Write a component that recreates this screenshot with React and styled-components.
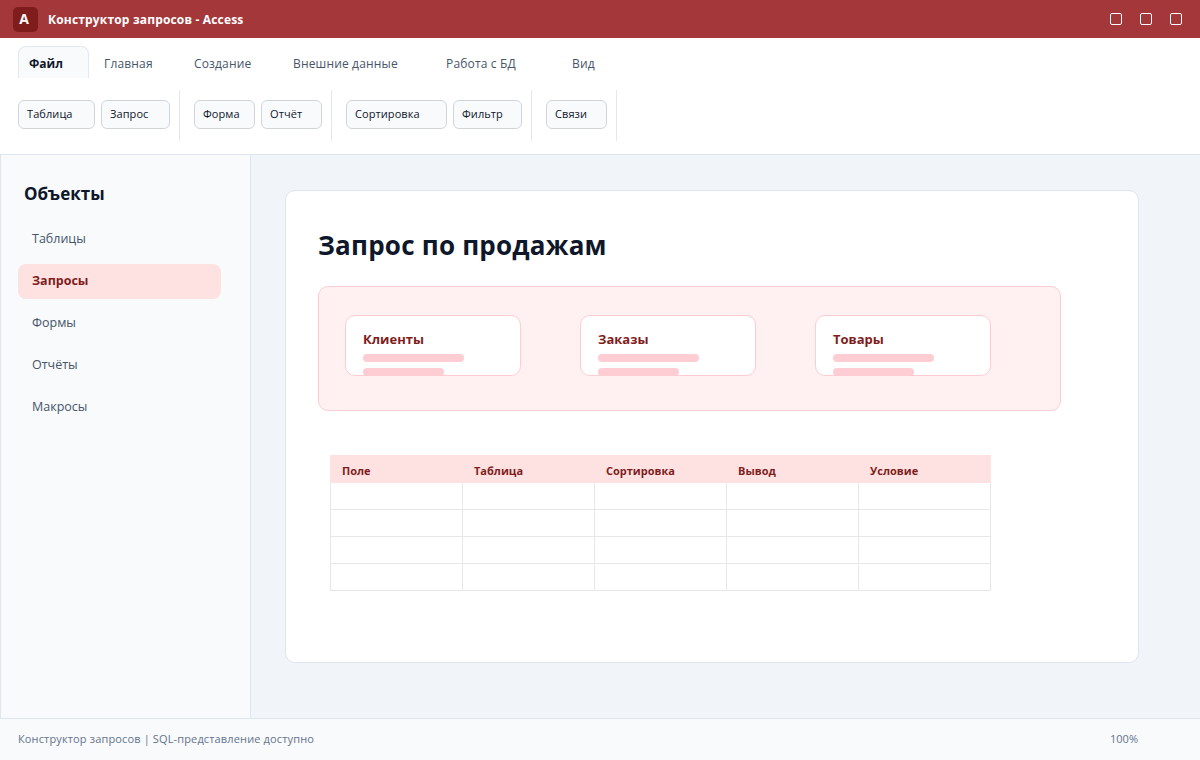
import React from 'react';
import styled, { createGlobalStyle } from 'styled-components';

const GlobalStyle = createGlobalStyle`
  html, body {
    margin: 0;
    padding: 0;
    height: 100%;
  }

  body {
    font-family: "Open Sans", "Noto Sans", sans-serif;
    background-color: #ffffff;
  }

  * {
    box-sizing: border-box;
  }
`;

const Window = styled.div`
  display: flex;
  flex-direction: column;
  width: 1200px;
  height: 760px;
  overflow: hidden;
`;

const TitleBar = styled.header`
  display: flex;
  align-items: center;
  flex: 0 0 38px;
  padding: 0 18px 0 13px;
  background-color: #a4373a;
  color: #ffffff;
`;

const Logo = styled.div`
  display: grid;
  place-items: center;
  width: 25px;
  height: 25px;
  margin-right: 10px;
  padding: 0 3px 2px 0;
  border-radius: 5px;
  background-color: #7f1d1d;
  font-size: 14px;
  font-weight: 700;
`;

const Title = styled.div`
  flex: 1;
  font-size: 12px;
  font-weight: 700;
  letter-spacing: 0.17px;
`;

const WindowControls = styled.div`
  display: flex;
  gap: 18px;
`;

const WindowControl = styled.div`
  width: 12px;
  height: 12px;
  border: 1px solid #ffffff;
  border-radius: 2px;
`;

const Ribbon = styled.div`
  flex: 0 0 117px;
  padding: 8px 18px 0;
  border-bottom: 1px solid #dfe5ee;
  background-color: #ffffff;
`;

const Tabs = styled.nav`
  display: flex;
  gap: 4px;
  height: 32px;
`;

const Tab = styled.div`
  display: flex;
  align-items: center;
  width: ${(p) => p.$width}px;
  padding: 2px 10px 0;
  border: 1px solid ${(p) => (p.$active ? '#e2e8f0' : 'transparent')};
  border-bottom: none;
  border-radius: 8px 8px 0 0;
  background-color: ${(p) => (p.$active ? '#f8fafc' : 'transparent')};
  color: ${(p) => (p.$active ? '#0f172a' : '#475569')};
  font-size: 12px;
  font-weight: ${(p) => (p.$active ? 700 : 400)};
  letter-spacing: ${(p) => (p.$active ? 0 : 0.16)}px;
  white-space: nowrap;
`;

const Tools = styled.div`
  display: flex;
  height: 51px;
  margin-top: 12px;
`;

const ToolGroup = styled.div`
  display: flex;
  align-items: center;
  gap: 6px;
  margin-right: 14px;
  padding-right: 9px;
  padding-bottom: 2px;
  border-right: 1px solid #e5e7eb;
`;

const ToolButton = styled.button`
  width: ${(p) => p.$width}px;
  height: 29px;
  padding: 0 8px 2px;
  border: 1px solid #d1d5db;
  border-radius: 6px;
  background-color: #f8fafc;
  color: #0f172a;
  font-family: inherit;
  font-size: 11px;
  letter-spacing: 0.08px;
  text-align: left;
`;

const Body = styled.div`
  display: flex;
  flex: 1;
  min-height: 0;
`;

const Sidebar = styled.aside`
  flex: 0 0 251px;
  padding: 28px 29px 0 17px;
  border-left: 1px solid #dfe5ee;
  border-right: 1px solid #dfe5ee;
  background-color: #f8fafc;
`;

const SidebarTitle = styled.h2`
  margin: 0 0 17px 6px;
  color: #0f172a;
  font-size: 17px;
  line-height: 22px;
  font-weight: 700;
`;

const SideItem = styled.div`
  display: flex;
  align-items: center;
  height: 35px;
  margin-bottom: 7px;
  padding: 0 14px 2px;
  border-radius: 8px;
  background-color: ${(p) => (p.$active ? '#fee2e2' : 'transparent')};
  color: ${(p) => (p.$active ? '#7f1d1d' : '#475569')};
  font-size: 12.5px;
  font-weight: ${(p) => (p.$active ? 700 : 400)};
`;

const Main = styled.main`
  flex: 1;
  padding: 35px 61px 55px 34px;
  background-color: #f1f4f9;
`;

const Card = styled.section`
  height: 473px;
  padding: 35px 32px 32px;
  border: 1px solid #dfe5ee;
  border-radius: 10px;
  background-color: #ffffff;
`;

const Heading = styled.h1`
  margin: 0 0 22px;
  color: #0f172a;
  font-size: 26px;
  line-height: 38px;
  font-weight: 700;
  letter-spacing: 0.22px;
`;

const Diagram = styled.div`
  display: flex;
  gap: 59px;
  width: 743px;
  height: 125px;
  padding: 28px 26px;
  border: 1px solid #fecdd3;
  border-radius: 10px;
  background-color: #fff0f1;
`;

const TableCard = styled.div`
  width: 176px;
  height: 61px;
  padding: 14px 17px 0;
  overflow: hidden;
  border: 1px solid #fecdd3;
  border-radius: 10px;
  background-color: #ffffff;
`;

const TableName = styled.div`
  margin-bottom: 6px;
  color: #7f1d1d;
  font-size: 13px;
  line-height: 18px;
  font-weight: 700;
`;

const FieldBar = styled.div`
  width: ${(p) => p.$width}px;
  height: 8px;
  margin-bottom: 6px;
  border-radius: 4px;
  background-color: #fecdd3;
`;

const Grid = styled.table`
  width: 661px;
  margin: 44px 0 0 12px;
  border-collapse: collapse;
  table-layout: fixed;
`;

const HeaderCell = styled.th`
  height: 27px;
  padding: 2px 11px 0;
  border: 1px solid #fee2e2;
  background-color: #fee2e2;
  color: #7f1d1d;
  font-size: 11px;
  font-weight: 700;
  text-align: left;
`;

const Cell = styled.td`
  height: 27px;
  padding: 0;
  border: 1px solid #e5e7eb;
`;

const StatusBar = styled.footer`
  display: flex;
  align-items: center;
  justify-content: space-between;
  flex: 0 0 42px;
  padding: 0 62px 2px 18px;
  border-top: 1px solid #dfe5ee;
  background-color: #f8fafc;
  color: #64748b;
  font-size: 11px;
`;

const StatusText = styled.span`
  letter-spacing: 0.14px;
`;

const tabs = [
  ['Файл', 71],
  ['Главная', 86],
  ['Создание', 95],
  ['Внешние данные', 149],
  ['Работа с БД', 122],
  ['Вид', 60],
];

const toolGroups = [
  [['Таблица', 77], ['Запрос', 69]],
  [['Форма', 61], ['Отчёт', 61]],
  [['Сортировка', 101], ['Фильтр', 69]],
  [['Связи', 61]],
];

const objects = ['Таблицы', 'Запросы', 'Формы', 'Отчёты', 'Макросы'];
const tables = ['Клиенты', 'Заказы', 'Товары'];
const columns = ['Поле', 'Таблица', 'Сортировка', 'Вывод', 'Условие'];
const rows = [0, 1, 2, 3];

const App = () => {
  return (
    <Window>
      <GlobalStyle />
      <TitleBar>
        <Logo>A</Logo>
        <Title>Конструктор запросов - Access</Title>
        <WindowControls>
          <WindowControl />
          <WindowControl />
          <WindowControl />
        </WindowControls>
      </TitleBar>
      <Ribbon>
        <Tabs>
          {tabs.map(([name, width], i) => (
            <Tab key={name} $width={width} $active={i === 0}>{name}</Tab>
          ))}
        </Tabs>
        <Tools>
          {toolGroups.map((group) => (
            <ToolGroup key={group[0][0]}>
              {group.map(([name, width]) => (
                <ToolButton key={name} $width={width}>{name}</ToolButton>
              ))}
            </ToolGroup>
          ))}
        </Tools>
      </Ribbon>
      <Body>
        <Sidebar>
          <SidebarTitle>Объекты</SidebarTitle>
          {objects.map((name) => (
            <SideItem key={name} $active={name === 'Запросы'}>{name}</SideItem>
          ))}
        </Sidebar>
        <Main>
          <Card>
            <Heading>Запрос по продажам</Heading>
            <Diagram>
              {tables.map((name) => (
                <TableCard key={name}>
                  <TableName>{name}</TableName>
                  <FieldBar $width={101} />
                  <FieldBar $width={81} />
                </TableCard>
              ))}
            </Diagram>
            <Grid>
              <thead>
                <tr>
                  {columns.map((name) => (
                    <HeaderCell key={name}>{name}</HeaderCell>
                  ))}
                </tr>
              </thead>
              <tbody>
                {rows.map((row) => (
                  <tr key={row}>
                    {columns.map((name) => (
                      <Cell key={name} />
                    ))}
                  </tr>
                ))}
              </tbody>
            </Grid>
          </Card>
        </Main>
      </Body>
      <StatusBar>
        <StatusText>Конструктор запросов | SQL-представление доступно</StatusText>
        <span>100%</span>
      </StatusBar>
    </Window>
  );
};

export default App;
